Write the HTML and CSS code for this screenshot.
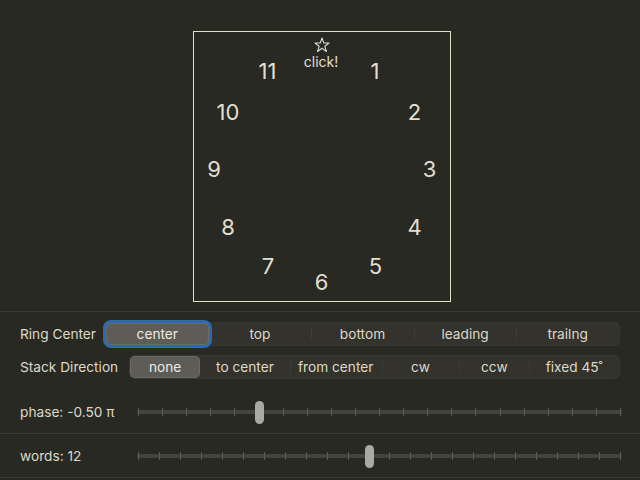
FILE: index.html
```html
<!DOCTYPE html>
<html>
<head>
<meta charset="utf-8">
<link rel="stylesheet" href="styles.css">
</head>
<body>
<div class="stage">
  <div class="clock">
    <svg class="star" style="--x:127.5px;--y:12.5px" width="16" height="16" viewBox="0 0 16 16"><polygon points="8,1 9.8,6 15,6 10.8,9.2 12.4,14.5 8,11.3 3.6,14.5 5.2,9.2 1,6 6.2,6" fill="none" stroke="#dcdac8" stroke-width="1.1" stroke-linejoin="round"/></svg>
    <span class="word small" style="--x:127px;--y:30px">click!</span>
    <span class="word" style="--x:181px;--y:38.5px">1</span>
    <span class="word" style="--x:220.5px;--y:80px">2</span>
    <span class="word" style="--x:235.5px;--y:137px">3</span>
    <span class="word" style="--x:220.5px;--y:194.5px">4</span>
    <span class="word" style="--x:181.5px;--y:234px">5</span>
    <span class="word" style="--x:127.5px;--y:249.5px">6</span>
    <span class="word" style="--x:74px;--y:234px">7</span>
    <span class="word" style="--x:34px;--y:194.5px">8</span>
    <span class="word" style="--x:20px;--y:137px">9</span>
    <span class="word" style="--x:34px;--y:80px">10</span>
    <span class="word" style="--x:73.5px;--y:38.5px">11</span>
  </div>
</div>
<div class="pickers">
  <div class="row">
    <span class="label">Ring Center</span>
    <div class="seg equal">
      <span class="opt selected focused">center</span>
      <span class="opt">top</span>
      <span class="opt div">bottom</span>
      <span class="opt div">leading</span>
      <span class="opt div">trailng</span>
    </div>
  </div>
  <div class="row wide-gap">
    <span class="label">Stack Direction</span>
    <div class="seg sized">
      <span class="opt selected">none</span>
      <span class="opt">to center</span>
      <span class="opt div">from center</span>
      <span class="opt div">cw</span>
      <span class="opt div">ccw</span>
      <span class="opt div">fixed 45˚</span>
    </div>
  </div>
</div>
<div class="slider-row">
  <span class="label slabel">phase: -0.50 π</span>
  <div class="slider">
    <div class="track"></div>
    <i class="tick" style="--p:0"></i><i class="tick" style="--p:.05"></i><i class="tick" style="--p:.1"></i><i class="tick" style="--p:.15"></i><i class="tick" style="--p:.2"></i><i class="tick" style="--p:.25"></i><i class="tick" style="--p:.3"></i><i class="tick" style="--p:.35"></i><i class="tick" style="--p:.4"></i><i class="tick" style="--p:.45"></i><i class="tick" style="--p:.5"></i><i class="tick" style="--p:.55"></i><i class="tick" style="--p:.6"></i><i class="tick" style="--p:.65"></i><i class="tick" style="--p:.7"></i><i class="tick" style="--p:.75"></i><i class="tick" style="--p:.8"></i><i class="tick" style="--p:.85"></i><i class="tick" style="--p:.9"></i><i class="tick" style="--p:.95"></i><i class="tick" style="--p:1"></i>
    <div class="thumb" style="--p:.248"></div>
  </div>
</div>
<div class="slider-row">
  <span class="label slabel">words: 12</span>
  <div class="slider">
    <div class="track"></div>
    <i class="tick" style="--p:0"></i><i class="tick" style="--p:.04348"></i><i class="tick" style="--p:.08696"></i><i class="tick" style="--p:.13043"></i><i class="tick" style="--p:.17391"></i><i class="tick" style="--p:.21739"></i><i class="tick" style="--p:.26087"></i><i class="tick" style="--p:.30435"></i><i class="tick" style="--p:.34783"></i><i class="tick" style="--p:.3913"></i><i class="tick" style="--p:.43478"></i><i class="tick" style="--p:.47826"></i><i class="tick" style="--p:.52174"></i><i class="tick" style="--p:.56522"></i><i class="tick" style="--p:.6087"></i><i class="tick" style="--p:.65217"></i><i class="tick" style="--p:.69565"></i><i class="tick" style="--p:.73913"></i><i class="tick" style="--p:.78261"></i><i class="tick" style="--p:.82609"></i><i class="tick" style="--p:.86957"></i><i class="tick" style="--p:.91304"></i><i class="tick" style="--p:.95652"></i><i class="tick" style="--p:1"></i>
    <div class="thumb" style="--p:.47826"></div>
  </div>
</div>
</body>
</html>
```
FILE: styles.css
```css
html, body {
  margin: 0;
  padding: 0;
}
body {
  width: 640px;
  height: 480px;
  overflow: hidden;
  background: #292924;
  color: #dedbc9;
  font-family: Inter, "Noto Sans", "Liberation Sans", sans-serif;
  font-size: 13.7px;
}
.stage {
  box-sizing: border-box;
  height: 312px;
  padding: 31px 0 0 4px;
  display: flex;
  justify-content: center;
  align-items: flex-start;
  border-bottom: 1px solid #3a3a33;
}
.clock {
  position: relative;
  box-sizing: border-box;
  width: 258px;
  height: 271px;
  border: 1px solid #e4e0c2;
}
.word {
  position: absolute;
  left: var(--x);
  top: var(--y);
  transform: translate(-50%, -50%);
  font-size: 22px;
  line-height: 1;
  color: #e2dfcf;
  white-space: nowrap;
}
.word.small {
  font-size: 14px;
}
.star {
  position: absolute;
  left: var(--x);
  top: var(--y);
  transform: translate(-50%, -50%);
}
.pickers {
  display: flex;
  flex-direction: column;
  gap: 9px;
  padding: 10px 20px 11px 20px;
}
.row {
  display: flex;
  align-items: center;
  gap: 9px;
  height: 24px;
}
.row.wide-gap {
  gap: 11px;
}
.label {
  white-space: nowrap;
  color: #dcd9c8;
}
.seg {
  flex: 1;
  display: flex;
  height: 24px;
  box-sizing: border-box;
  padding: 1px;
  border-radius: 6px;
  background: #33322d;
  box-shadow: inset 0 0 0 0.5px rgba(255,255,255,0.06);
}
.opt {
  position: relative;
  flex: 1 1 auto;
  text-align: center;
  line-height: 22px;
  border-radius: 5px;
  white-space: nowrap;
  color: #dcd9c8;
}
.seg.equal .opt {
  flex: 1 1 0;
}
.seg.sized .opt:nth-child(1) { flex: 70 1 0; }
.seg.sized .opt:nth-child(2) { flex: 90 1 0; }
.seg.sized .opt:nth-child(3) { flex: 92 1 0; }
.seg.sized .opt:nth-child(4) { flex: 78 1 0; }
.seg.sized .opt:nth-child(5) { flex: 70 1 0; }
.seg.sized .opt:nth-child(6) { flex: 90 1 0; }
.opt.div::before {
  content: "";
  position: absolute;
  left: 0;
  top: 5px;
  height: 12px;
  width: 1px;
  background: rgba(255,255,255,0.05);
}
.opt.selected {
  background: #5d5c57;
  color: #ecebe4;
  box-shadow: inset 0 0 0 0.5px rgba(255,255,255,0.18);
}
.opt.focused {
  box-shadow: 0 0 0 3px #2d69ad, inset 0 0 0 0.5px rgba(255,255,255,0.18);
}
.slider-row {
  display: flex;
  align-items: center;
  height: 43px;
  padding: 0 18px 0 20px;
  border-bottom: 1px solid #3a3a33;
}
.slabel {
  width: 117px;
  flex: none;
}
.slider {
  position: relative;
  flex: 1;
  height: 24px;
}
.track {
  position: absolute;
  left: 0;
  right: 0;
  top: 10px;
  height: 4px;
  border-radius: 2px;
  background: #45443c;
}
.tick {
  position: absolute;
  top: 8px;
  width: 1px;
  height: 8px;
  background: #5d5c52;
  left: calc(1px + (100% - 3px) * var(--p));
}
.thumb {
  position: absolute;
  top: 1px;
  width: 9px;
  height: 23px;
  border-radius: 5px;
  background: #a9a8a1;
  left: calc(4px + (100% - 8px) * var(--p) - 4.5px);
}
```
